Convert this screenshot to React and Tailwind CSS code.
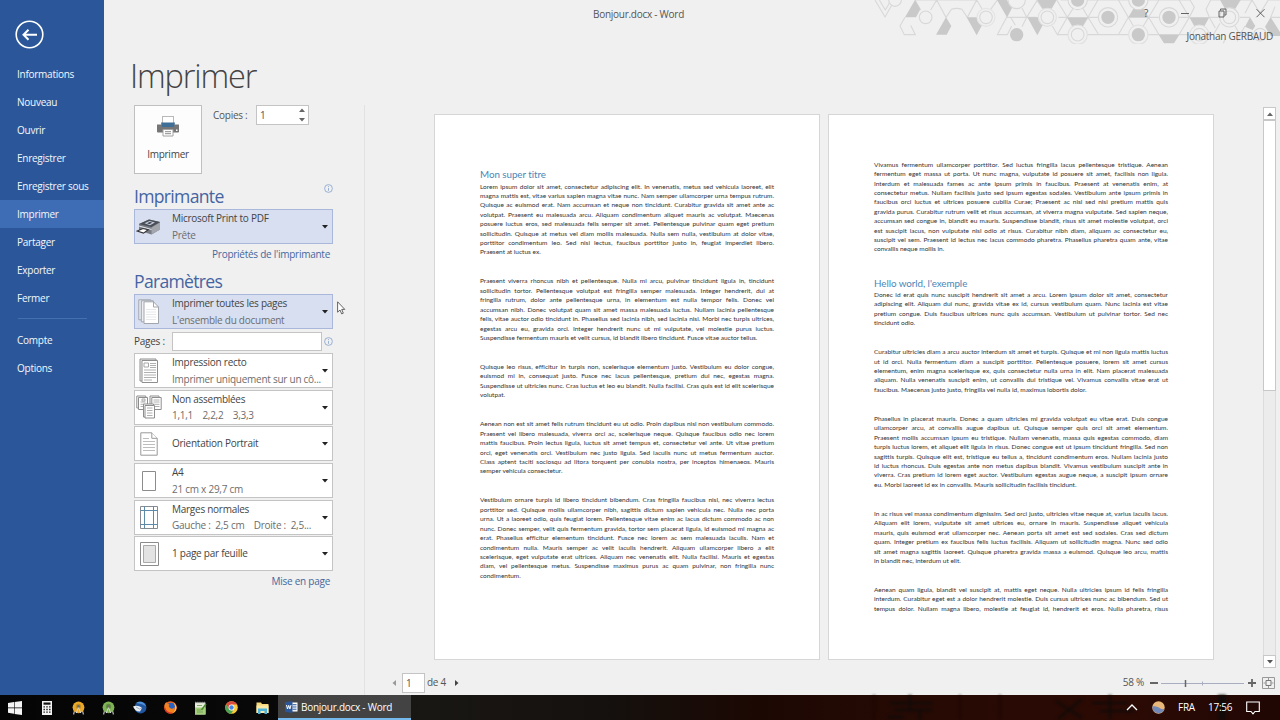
import clsx from "clsx";

const menuItems = [
  { label: "Informations" },
  { label: "Nouveau" },
  { label: "Ouvrir" },
  { label: "Enregistrer" },
  { label: "Enregistrer sous" },
  { label: "Imprimer", active: true },
  { label: "Partager" },
  { label: "Exporter" },
  { label: "Fermer" },
];

// every entry is one paragraph, already split into lines
const pageOne = [
  [
    "Lorem ipsum dolor sit amet, consectetur adipiscing elit. In venenatis, metus sed vehicula laoreet, elit",
    "magna mattis est, vitae varius sapien magna vitae nunc. Nam semper ullamcorper urna tempus rutrum.",
    "Quisque ac euismod erat. Nam accumsan et neque non tincidunt. Curabitur gravida sit amet ante ac",
    "volutpat. Praesent eu malesuada arcu. Aliquam condimentum aliquet mauris ac volutpat. Maecenas",
    "posuere luctus eros, sed malesuada felis semper sit amet. Pellentesque pulvinar quam eget pretium",
    "sollicitudin. Quisque at metus vel diam mollis malesuada. Nulla sem nulla, vestibulum at dolor vitae,",
    "porttitor condimentum leo. Sed nisi lectus, faucibus porttitor justo in, feugiat imperdiet libero.",
    "Praesent at luctus ex.",
  ],
  [
    "Praesent viverra rhoncus nibh et pellentesque. Nulla mi arcu, pulvinar tincidunt ligula in, tincidunt",
    "sollicitudin tortor. Pellentesque volutpat est fringilla semper malesuada. Integer hendrerit, dui at",
    "fringilla rutrum, dolor ante pellentesque urna, in elementum est nulla tempor felis. Donec vel",
    "accumsan nibh. Donec volutpat quam sit amet massa malesuada luctus. Nullam lacinia pellentesque",
    "felis, vitae auctor odio tincidunt in. Phasellus sed lacinia nibh, sed lacinia nisi. Morbi nec turpis ultrices,",
    "egestas arcu eu, gravida orci. Integer hendrerit nunc ut mi vulputate, vel molestie purus luctus.",
    "Suspendisse fermentum mauris et velit cursus, id blandit libero tincidunt. Fusce vitae auctor tellus.",
  ],
  [
    "Quisque leo risus, efficitur in turpis non, scelerisque elementum justo. Vestibulum eu dolor congue,",
    "euismod mi in, consequat justo. Fusce nec lacus pellentesque, pretium dui nec, egestas magna.",
    "Suspendisse ut ultricies nunc. Cras luctus et leo eu blandit. Nulla facilisi. Cras quis est id elit scelerisque",
    "volutpat.",
  ],
  [
    "Aenean non est sit amet felis rutrum tincidunt eu ut odio. Proin dapibus nisl non vestibulum commodo.",
    "Praesent vel libero malesuada, viverra orci ac, scelerisque neque. Quisque faucibus odio nec lorem",
    "mattis faucibus. Proin lectus ligula, luctus sit amet tempus et, consectetur vel ante. Ut vitae pretium",
    "orci, eget venenatis orci. Vestibulum nec justo ligula. Sed iaculis nunc ut metus fermentum auctor.",
    "Class aptent taciti sociosqu ad litora torquent per conubia nostra, per inceptos himenaeos. Mauris",
    "semper vehicula consectetur.",
  ],
  [
    "Vestibulum ornare turpis id libero tincidunt bibendum. Cras fringilla faucibus nisl, nec viverra lectus",
    "porttitor sed. Quisque mollis ullamcorper nibh, sagittis dictum sapien vehicula nec. Nulla nec porta",
    "urna. Ut a laoreet odio, quis feugiat lorem. Pellentesque vitae enim ac lacus dictum commodo ac non",
    "nunc. Donec semper, velit quis fermentum gravida, tortor sem placerat ligula, id euismod mi magna ac",
    "erat. Phasellus efficitur elementum tincidunt. Fusce nec lorem ac sem malesuada iaculis. Nam et",
    "condimentum nulla. Mauris semper ac velit iaculis hendrerit. Aliquam ullamcorper libero a elit",
    "scelerisque, eget vulputate erat ultrices. Aliquam nec venenatis elit. Nulla facilisi. Mauris et egestas",
    "diam, vel pellentesque metus. Suspendisse maximus purus ac quam pulvinar, non fringilla nunc",
    "condimentum.",
  ],
];

const pageTwoTop = [
  [
    "Vivamus fermentum ullamcorper porttitor. Sed luctus fringilla lacus pellentesque tristique. Aenean",
    "fermentum eget massa ut porta. Ut nunc magna, vulputate id posuere sit amet, facilisis non ligula.",
    "Interdum et malesuada fames ac ante ipsum primis in faucibus. Praesent at venenatis enim, at",
    "consectetur metus. Nullam facilisis justo sed ipsum egestas sodales. Vestibulum ante ipsum primis in",
    "faucibus orci luctus et ultrices posuere cubilia Curae; Praesent ac nisl sed nisi pretium mattis quis",
    "gravida purus. Curabitur rutrum velit et risus accumsan, at viverra magna vulputate. Sed sapien neque,",
    "accumsan sed congue in, blandit eu mauris. Suspendisse blandit, risus sit amet molestie volutpat, orci",
    "est suscipit lacus, non vulputate nisl odio at risus. Curabitur nibh diam, aliquam ac consectetur eu,",
    "suscipit vel sem. Praesent id lectus nec lacus commodo pharetra. Phasellus pharetra quam ante, vitae",
    "convallis neque mollis in.",
  ],
];

const pageTwoBottom = [
  [
    "Donec id erat quis nunc suscipit hendrerit sit amet a arcu. Lorem ipsum dolor sit amet, consectetur",
    "adipiscing elit. Aliquam dui nunc, gravida vitae ex id, cursus vestibulum quam. Nunc lacinia est vitae",
    "pretium congue. Duis faucibus ultrices nunc quis accumsan. Vestibulum ut pulvinar tortor. Sed nec",
    "tincidunt odio.",
  ],
  [
    "Curabitur ultricies diam a arcu auctor interdum sit amet et turpis. Quisque et mi non ligula mattis luctus",
    "ut id orci. Nulla fermentum diam a suscipit porttitor. Pellentesque posuere, lorem sit amet cursus",
    "elementum, enim magna scelerisque ex, quis consectetur nulla urna in elit. Nam placerat malesuada",
    "aliquam. Nulla venenatis suscipit enim, ut convallis dui tristique vel. Vivamus convallis vitae erat ut",
    "faucibus. Maecenas justo justo, fringilla vel nulla id, maximus lobortis dolor.",
  ],
  [
    "Phasellus in placerat mauris. Donec a quam ultricies mi gravida volutpat eu vitae erat. Duis congue",
    "ullamcorper arcu, at convallis augue dapibus ut. Quisque semper quis orci sit amet elementum.",
    "Praesent mollis accumsan ipsum eu tristique. Nullam venenatis, massa quis egestas commodo, diam",
    "turpis luctus lorem, et aliquet elit ligula in risus. Donec congue est ut ipsum tincidunt fringilla. Sed non",
    "sagittis turpis. Quisque elit est, tristique eu tellus a, tincidunt condimentum eros. Nullam lacinia justo",
    "id luctus rhoncus. Duis egestas ante non metus dapibus blandit. Vivamus vestibulum suscipit ante in",
    "viverra. Cras pretium id lorem eget auctor. Vestibulum egestas augue neque, a suscipit ipsum ornare",
    "eu. Morbi laoreet id ex in convallis. Mauris sollicitudin facilisis tincidunt.",
  ],
  [
    "In ac risus vel massa condimentum dignissim. Sed orci justo, ultricies vitae neque at, varius iaculis lacus.",
    "Aliquam elit lorem, vulputate sit amet ultrices eu, ornare in mauris. Suspendisse aliquet vehicula",
    "mauris, quis euismod erat ullamcorper nec. Aenean porta sit amet est sed sodales. Cras sed dictum",
    "quam. Integer pretium ex faucibus felis luctus facilisis. Aliquam ut sollicitudin magna. Nunc sed odio",
    "sit amet magna sagittis laoreet. Quisque pharetra gravida massa a euismod. Quisque leo arcu, mattis",
    "in blandit nec, interdum ut elit.",
  ],
  [
    "Aenean quam ligula, blandit vel suscipit at, mattis eget neque. Nulla ultricies ipsum id felis fringilla",
    "interdum. Curabitur eget est a dolor hendrerit molestie. Duis cursus ultrices nunc ac bibendum. Sed ut",
    "tempus dolor. Nullam magna libero, molestie at feugiat id, hendrerit et eros. Nulla pharetra, risus",
  ],
];

const Paragraphs = ({ items, openEnd }) => (
  <div className="flex flex-col gap-[19.6px]">
    {items.map((lines, i) => (
      <div key={i}>
        {lines.map((line, j) => {
          const last = j === lines.length - 1 && !(openEnd && i === items.length - 1);
          return (
            <p
              key={j}
              className={clsx(
                "h-[9.43px] leading-[9.43px] whitespace-nowrap",
                last ? "text-left" : "text-justify [text-align-last:justify]"
              )}
            >
              {line}
            </p>
          );
        })}
      </div>
    ))}
  </div>
);

const DocHeading = ({ children }) => (
  <h3 className="h-[12px] leading-[12px] text-[9.8px] tracking-[-0.05px] text-[#4a86b8] whitespace-nowrap">{children}</h3>
);

const Sheet = ({ className, children }) => (
  <div
    className={clsx(
      "w-[386px] h-[546px] shrink-0 bg-white border border-[#d6d6d6] pl-[45px] pr-[45px] text-[6.5px] tracking-normal text-[#333] font-[Lato,sans-serif] [font-variant-ligatures:none]",
      className
    )}
  >
    {children}
  </div>
);

/* ---------- drawings ---------- */

const HexPattern = () => (
  <svg className="absolute right-0 top-0" width="420" height="44" viewBox="0 0 1260 132" fill="none" stroke="#d8d8d8" strokeWidth="3.3">
    <path d="M45 0L75 51L96 14M58 0L76 30L88 10M165 0H350M135 52L120 78L133 104H166L152 76M165 0L182 30M212 30L230 0L258 52L274 28Q290 22 306 28L322 52L350 0L366 26M392 28L412 0M440 52L412 104H442L455 78M440 52H500L532 0M440 52L455 24M486 24L500 52L486 80M452 52L466 76M590 0L622 52L592 104L577 78M592 104H628M676 104H716L684 52L714 0H775L805 52L775 104H716M602 0H626M680 0H714M622 52L652 104M684 52L652 104M622 52L640 24M684 52L668 24M775 104H808M862 104H897L866 52L897 0H957L988 52L957 104H897M805 52H866L850 78M805 52L820 78M775 0H808M862 0H897M622 52L595 52M684 52H714M866 52H896M957 52H988L1003 22L990 0H957M957 104H991M1046 104H1060L1080 70M1048 52L1038 28L1052 0H1080M1048 52H1078M1048 52L1066 84M1140 0H1176L1155 40M1176 0L1200 40L1225 0H1260M1140 52H1170M1232 52H1260M1245 20L1232 52M1125 78L1140 104L1132 124M1140 104H1172M1155 78L1140 104M1090 130L1096 116M530 0L548 26M500 52L530 52" />
    <g fill="#c9c9c9" stroke="none">
      <path d="M135 52L165 0L181 28L168 52ZM228 104L258 52L274 78L260 104ZM320 52H352L366 76L350 106ZM411 0H440L456 22L441 52ZM502 52H534L548 76L532 106ZM532 0H590L575 26H548ZM622 52H684L668 79H638ZM805 52L820 26H851L866 52ZM896 104H958L942 130H912ZM988 52H1048L1033 79H1003ZM1080 0H1142L1126 26H1095ZM1155 80L1170 52L1186 78L1178 90ZM1215 80L1232 52L1260 96V108H1232Z" />
    </g>
    <g fill="#f0f0f0">
      <circle cx="105" cy="0" r="19" />
      <circle cx="197" cy="52" r="19" />
      <circle cx="378" cy="52" r="27" stroke="#e4e4e4" />
      <circle cx="378" cy="52" r="19" />
      <circle cx="470" cy="0" r="26" />
      <circle cx="562" cy="52" r="27" stroke="#e0e0e0" />
      <circle cx="562" cy="52" r="19" />
      <circle cx="653" cy="0" r="29" />
      <circle cx="653" cy="104" r="29" stroke="#e0e0e0" />
      <circle cx="653" cy="104" r="19" />
      <circle cx="744" cy="52" r="29" />
      <circle cx="835" cy="0" r="29" />
      <circle cx="835" cy="104" r="29" stroke="#e0e0e0" />
      <circle cx="927" cy="52" r="29" />
      <circle cx="1018" cy="104" r="29" stroke="#e0e0e0" />
      <circle cx="1018" cy="104" r="19" />
      <circle cx="1108" cy="52" r="29" />
      <circle cx="1108" cy="52" r="19" />
      <circle cx="1200" cy="104" r="19" />
    </g>
    <g fill="#c9c9c9" stroke="none">
      <circle cx="470" cy="104" r="20" />
      <circle cx="653" cy="0" r="20" />
      <circle cx="744" cy="52" r="20" />
      <circle cx="835" cy="0" r="20" />
      <circle cx="835" cy="104" r="20" />
      <circle cx="927" cy="52" r="20" />
    </g>
  </svg>
);

const PrinterIcon = () => (
  <svg width="24" height="21" viewBox="0 0 24 21">
    <path d="M1 8.5h22v7a1 1 0 0 1-1 1H2a1 1 0 0 1-1-1z" fill="#767676" />
    <rect x="6.5" y=".5" width="11" height="8" fill="#fff" stroke="#b9b9b9" />
    <path d="M5 6.500h14l-1 4.500H6z" fill="#3f6e96" />
    <path d="M7 13.5h10v6.500H7z" fill="#fff" stroke="#a2a2a2" />
    <path d="M9 15.700h6M9 17.700h6" stroke="#8b8b8b" />
    <rect x="20" y="13.500" width="1.500" height="1.500" fill="#fff" />
  </svg>
);

const DeviceIcon = () => (
  <svg width="26" height="18" viewBox="0 0 26 18">
    <path d="M3 6L13 1.500l11 2.500v7.500L15.500 16.500 3 12.500z" fill="#777b83" />
    <path d="M3 6L13 1.500l11 2.500-8.500 5z" fill="#4a4e56" />
    <path d="M8.500 5.300L13.500 3l5.500 1.500-5 2.700z" fill="#c3cbdc" />
    <path d="M11 5.200l3-1.300 2.300.8-3 1.400z" fill="#33373e" />
    <path d="M15.500 9.500l8.500-5v7L15.500 16.500z" fill="#a3a6ad" />
    <path d="M3 8l12.500 3.500" stroke="#e0e3ea" strokeWidth="1.200" />
    <path d="M1.200 13L7 10.500l5.200 1.300-4.700 3.300z" fill="#fff" stroke="#333" strokeWidth="1.100" />
  </svg>
);

const PagesIcon = () => (
  <svg width="22" height="26" viewBox="0 0 22 26" fill="#eceef3" stroke="#a1a5ad">
    <path d="M.8 .8h12v20H.8z" />
    <path d="M3.300 1.800h12v21h-12z" />
    <path d="M6 2.800h9.500l5 5.200v16.500H6z" fill="#fff" />
    <path d="M15.500 2.800V8h5" fill="none" />
    <path d="M8 10.500h10M8 13h10M8 15.500h10M8 18h10M8 20.500h10" stroke="#e6e8ec" />
  </svg>
);

const OneSidedIcon = () => (
  <svg width="20" height="26" viewBox="0 0 20 26" fill="#fff" stroke="#8e8e8e">
    <path d="M1 1h16v22H1z" fill="#eee" />
    <path d="M3 2.500h15.500v22H3z" />
    <path d="M5 5h4.500v4H5z" stroke="#a8a8a8" />
    <path d="M11 5.500h6M11 7.500h6M11 9.500h6M5 12h12M5 14.500h12M5 17h12M5 19.500h12M5 22h8" stroke="#b0b0b0" />
  </svg>
);

const CollateIcon = () => (
  <svg width="26" height="24" viewBox="0 0 26 24" fill="#fff" stroke="#8e8e8e">
    <path d="M.8 1h9v12h-9z" />
    <path d="M2.500 2.500h9v12h-9z" />
    <path d="M14 1h9v12h-9z" />
    <path d="M15.800 2.500h9.400v12h-9.400z" />
    <path d="M4.500 7h5M4.500 9.300h5M4.500 11.500h5M17.500 5h6M17.500 7h6M17.500 9.300h6M17.500 11.500h6" stroke="#b0b0b0" />
    <path d="M6 4h3v2H6z" stroke="#a8a8a8" />
    <path d="M7.500 9h10v13h-10z" />
    <path d="M9 10.500h9.500v12.500H9z" />
    <path d="M11 13h5.500M11 15.500h5.500M11 18h5.500M11 20.500h5.500" stroke="#b0b0b0" />
  </svg>
);

const PortraitIcon = () => (
  <svg width="18" height="24" viewBox="0 0 18 24" fill="#fff" stroke="#999">
    <path d="M.8 .8h11l5.400 5.500v16.900H.8z" />
    <path d="M11.800 .8v5.500h5.400" />
    <path d="M3 6.500h6M3 9.500h12M3 12.500h12M3 15.500h12M3 18.500h12" stroke="#bdbdbd" />
  </svg>
);

const A4Icon = () => (
  <svg width="14" height="20" viewBox="0 0 14 20">
    <path d="M.5 .5h13v19H.5z" fill="#fff" stroke="#8c8c8c" />
  </svg>
);

const MarginsIcon = () => (
  <svg width="18" height="23" viewBox="0 0 18 23" fill="none">
    <path d="M.5 .5h17v22H.5z" fill="#fff" stroke="#858b91" />
    <path d="M4.500 .5v22M13.500 .5v22M.5 4.500h17M.5 18.500h17" stroke="#5d8aa8" />
  </svg>
);

const SheetIcon = () => (
  <svg width="19" height="24" viewBox="0 0 19 24">
    <path d="M.5 .5h18v23H.5z" fill="#fff" stroke="#8c8c8c" />
    <path d="M3.500 3.500h12v17h-12z" fill="#e3e3e3" stroke="#a9a9a9" />
  </svg>
);

const InfoIcon = () => (
  <svg width="9" height="9" viewBox="0 0 9 9" fill="none" stroke="#8fa9cf" strokeWidth=".9">
    <circle cx="4.500" cy="4.500" r="3.900" />
    <path d="M4.500 4v2.800M4.500 2.100v1" />
  </svg>
);

const WindowsLogo = () => (
  <svg width="14" height="14" viewBox="0 0 14 14" fill="#f5f5f5">
    <path d="M0 2l6-.9v5.500H0zM6.600 1L14 0v6.600H6.600zM0 7.200h6v5.500l-6-.9zM6.600 7.200H14V14l-7.400-1z" />
  </svg>
);

const CalculatorIcon = () => (
  <svg width="10" height="14" viewBox="0 0 10 14">
    <rect width="10" height="14" fill="#f3f3f3" />
    <path d="M1.500 1.500h7v2.200h-7z" fill="#111" />
    <path d="M2.200 5.200v7.500M5 5.200v7.500M7.800 5.200v7.500" stroke="#222" strokeWidth="1.500" strokeDasharray="1.400 1.200" />
  </svg>
);

const StudioIcon = ({ color, inner }) => (
  <svg width="13" height="14" viewBox="0 0 13 14">
    <path d="M3 8L1.500 13.500M10 8l1.500 5.500" stroke="#a9a9a9" strokeWidth="1.300" />
    <circle cx="6.500" cy="6.300" r="5.900" fill={color} />
    <circle cx="6.500" cy="5.500" r="2.700" fill={inner} />
    <path d="M4.300 12l2.200-5.500L8.700 12" fill="none" stroke="#d8d8d8" strokeWidth="1" />
    <circle cx="6.500" cy="5.200" r="1.300" fill="#6b6b5a" />
  </svg>
);

const ThunderbirdIcon = () => (
  <svg width="14" height="13" viewBox="0 0 14 13">
    <circle cx="7.500" cy="6.500" r="6" fill="#2257a0" />
    <path d="M3 2C6-.5 12 .5 13 5.500 10 3 7 2.500 3 2z" fill="#4f93d8" />
    <path d="M0 5.500c3-1.500 6-1 9 1.500L7 10.500C4 11 1.500 9 0 5.500z" fill="#e8ebf1" />
    <path d="M3 6l3.500 2L9 7" fill="none" stroke="#8592a8" strokeWidth=".7" />
  </svg>
);

const FirefoxIcon = () => (
  <svg width="13" height="13" viewBox="0 0 13 13">
    <circle cx="6.500" cy="6.500" r="6.200" fill="#f2661f" />
    <circle cx="7" cy="5.700" r="4" fill="#2a62c4" />
    <path d="M.5 4C1 2 2 1.500 2.500 1c.2 1.500 1.500 2 3 2.500C4 5 5 6.500 7 7.500c2 .6 3-.5 3.500-1.500 1 3-1.500 5.500-4 5.500C3 11.500 0 8 .5 4z" fill="#f58220" />
    <path d="M9 1.200c2.500 1.500 4 4 3.500 6.500-.5 2.500-3 4.500-5 4.800 3-1.500 4-4.500 3.500-7C10.700 3.500 10 2.300 9 1.200z" fill="#fcc43b" />
    <path d="M.7 7c.8 3.500 4 5.500 7 5.200" fill="none" stroke="#d7342f" strokeWidth="1.200" />
  </svg>
);

const NotepadIcon = () => (
  <svg width="13" height="14" viewBox="0 0 13 14">
    <path d="M1 1.500h10.500v12H1z" fill="#e9eedf" />
    <path d="M1 6.500h10.500v7H1z" fill="#a4cf7a" />
    <path d="M1 1.500h10.500" stroke="#999" strokeWidth="1.500" strokeDasharray="1 .8" />
    <path d="M3 4.500h5M3 9h4M3 11h6" stroke="#6d9450" strokeWidth=".8" />
    <path d="M12 3L7.500 9" stroke="#4c8a2d" strokeWidth="1.500" />
  </svg>
);

const ChromeIcon = () => (
  <svg width="13" height="13" viewBox="0 0 13 13">
    <circle cx="6.500" cy="6.500" r="6.300" fill="#f9cb3a" />
    <path d="M1 3.400A6.300 6.300 0 0 1 12 3.400H6.500L3.900 8z" fill="#dd4b3e" />
    <path d="M1 3.400L3.900 8l2.600 1.500 1.600.2L6 12.800A6.300 6.300 0 0 1 1 3.400z" fill="#4ba456" />
    <circle cx="6.500" cy="6.500" r="2.900" fill="#fff" />
    <circle cx="6.500" cy="6.500" r="2.200" fill="#4a86e0" />
  </svg>
);

const FolderIcon = () => (
  <svg width="13" height="12" viewBox="0 0 13 12">
    <path d="M.5 .5H5l1 1.500h6.500V11H.5z" fill="#f6d77b" />
    <path d="M.5 3.500h12V11H.5z" fill="#fbe8a4" />
    <path d="M2 12V6.500h9V12H8.500V9h-4v3z" fill="#4fb4dc" />
  </svg>
);

const WordIcon = () => (
  <svg width="13" height="12" viewBox="0 0 13 12">
    <path d="M6 1.500h6.500v9H6z" fill="#fff" />
    <path d="M7.500 3.500h4M7.500 5.200h4M7.500 6.900h4M7.500 8.600h4" stroke="#2b579a" strokeWidth=".8" />
    <path d="M0 1.300L7.500 0v12L0 10.700z" fill="#2b579a" />
    <path d="M1.500 4l1 4 1.200-3.600L4.900 8l1.100-4" fill="none" stroke="#fff" />
  </svg>
);

const Cursor = () => (
  <svg className="absolute left-[337px] top-[301px]" width="9" height="14" viewBox="0 0 9 14">
    <path d="M.6 .8v10.400L3 9l1.700 3.900 1.600-.7L4.700 8.400h3.100z" fill="#fff" stroke="#555" strokeWidth=".9" />
  </svg>
);

const Triangle = ({ className, up }) => (
  <svg className={clsx("shrink-0", className)} width="6" height="4" viewBox="0 0 6 4">
    <path d={up ? "M0 4L3 .5 6 4z" : "M0 0L3 3.500 6 0z"} fill="currentColor" />
  </svg>
);

/* ---------- print settings ---------- */

const OptionBox = ({ icon, title, detail, blue }) => (
  <div
    className={clsx(
      "flex items-center h-[35px] w-[199px] border shrink-0",
      blue ? "bg-[#d7dff1] border-[#a9b8da]" : "bg-white border-[#c4c4c4]"
    )}
  >
    <div className="w-[28px] flex justify-center shrink-0">{icon}</div>
    <div className={clsx("flex-1 min-w-0 pl-[9px] leading-[16.5px] whitespace-nowrap", !detail && "pb-[2px]")}>
      <p className="text-[#444]">{title}</p>
      {detail && <p className="text-[#6d6d6d] whitespace-pre">{detail}</p>}
    </div>
    <Triangle className="mr-[4px] mt-[1px] text-[#222]" />
  </div>
);

const Settings = () => (
  <section className="w-[261px] pl-[30px] pr-[31px] border-r border-[#e2e2e2] flex flex-col text-[#444]">
    <div className="flex">
      <button className="w-[68px] h-[69px] bg-[#fdfdfd] border border-[#c0c0c0] flex flex-col items-center pt-[10px]">
        <PrinterIcon />
        <span className="mt-[9px] leading-[16px]">Imprimer</span>
      </button>
      <span className="ml-[11px] w-[43px] leading-[20px] whitespace-nowrap text-[#555]">Copies :</span>
      <div className="w-[53px] h-[20px] bg-white border border-[#c4c4c4] flex items-center justify-between pl-[3px] pr-[3px]">
        <span className="text-[#555]">1</span>
        <span className="flex flex-col gap-[6px] text-[#666]">
          <Triangle up />
          <Triangle />
        </span>
      </div>
    </div>

    <div className="flex justify-between mt-[8px] h-[27px]">
      <h2 className="text-[17.600px] leading-[28px] tracking-[-0.700px] text-[#4464a2]">Imprimante</h2>
      <span className="mt-[2px]"><InfoIcon /></span>
    </div>
    <OptionBox blue icon={<DeviceIcon />} title="Microsoft Print to PDF" detail="Prête" />
    <a className="self-end mr-[3px] h-[20px] leading-[20px] text-[#44689f]">Propriétés de l'imprimante</a>

    <h2 className="h-[30px] text-[17.600px] leading-[34px] tracking-[-0.700px] text-[#4464a2]">Paramètres</h2>
    <OptionBox blue icon={<PagesIcon />} title="Imprimer toutes les pages" detail="L'ensemble du document" />
    <div className="flex items-center h-[24px] shrink-0">
      <span className="w-[38px]">Pages :</span>
      <div className="w-[150px] h-[19px] bg-white border border-[#c4c4c4] mr-[2px]" />
      <InfoIcon />
    </div>
    <div className="flex flex-col gap-[1.700px]">
      <OptionBox icon={<OneSidedIcon />} title="Impression recto" detail="Imprimer uniquement sur un cô..." />
      <OptionBox icon={<CollateIcon />} title="Non assemblées" detail={"1,1,1    2,2,2    3,3,3"} />
      <OptionBox icon={<PortraitIcon />} title="Orientation Portrait" />
      <OptionBox icon={<A4Icon />} title="A4" detail="21 cm x 29,7 cm" />
      <OptionBox icon={<MarginsIcon />} title="Marges normales" detail={"Gauche :  2,5 cm    Droite :  2,5..."} />
      <OptionBox icon={<SheetIcon />} title="1 page par feuille" />
    </div>
    <a className="self-end mr-[3px] h-[20px] leading-[20px] text-[#44689f]">Mise en page</a>
  </section>
);

/* ---------- preview ---------- */

const ScrollBar = () => (
  <div className="w-[13px] h-[561px] mt-[2px] ml-[49px] flex flex-col bg-[#ececec] border-x border-[#dcdcdc]">
    <div className="-mx-px h-[13px] border border-[#c8c8c8] bg-white flex items-center justify-center text-[#666]">
      <Triangle up />
    </div>
    <div className="-mx-px h-[271px] border border-[#c8c8c8] bg-white" />
    <div className="-mx-px h-[13px] mt-auto border border-[#c8c8c8] bg-white flex items-center justify-center text-[#555]">
      <Triangle />
    </div>
  </div>
);

const Preview = () => (
  <section className="flex-1 flex flex-col">
    <div className="flex h-[564px] pl-[69px]">
      <Sheet className="mt-[9px] pt-[53px]">
        <DocHeading>Mon super titre</DocHeading>
        <div className="mt-[1.500px]"><Paragraphs items={pageOne} /></div>
      </Sheet>
      <Sheet className="mt-[9px] ml-[8px] pt-[44.700px]">
        <Paragraphs items={pageTwoTop} />
        <div className="mt-[23.300px]"><DocHeading>Hello world, l'exemple</DocHeading></div>
        <div className="mt-[0.700px]"><Paragraphs items={pageTwoBottom} openEnd /></div>
      </Sheet>
      <ScrollBar />
    </div>
    <div className="flex items-center justify-between h-[26px] pt-[1px] pl-[26px] pr-[5px] text-[#555]">
      <div className="flex items-center">
        <Triangle className="rotate-90 text-[#999]" />
        <span className="ml-[5px] w-[23px] h-[20px] bg-white border border-[#c4c4c4] pl-[3px] leading-[18px]">1</span>
        <span className="ml-[2px] w-[27px]">de 4</span>
        <Triangle className="-rotate-90 text-[#444]" />
      </div>
      <div className="flex items-center">
        <span className="mr-[5px]">58 %</span>
        <svg width="108" height="12" viewBox="0 0 108 12">
          <path d="M1 6h8M99 6h8M103 2v8" stroke="#666" strokeWidth="1.800" />
          <path d="M12 6.500h83" stroke="#a9adc0" />
          <path d="M53.500 4.500v4" stroke="#a9adc0" />
          <path d="M36.500 3v7" stroke="#666" strokeWidth="1.500" />
        </svg>
        <svg className="ml-[5px]" width="13" height="12" viewBox="0 0 13 12" fill="none" stroke="#777">
          <path d="M.5 .5h12v11H.5z" stroke="#999" />
          <path d="M4 3.500h5v5H4z" />
          <path d="M6.500 1v2M6.500 9v2M1.500 6h2M9.500 6h2" stroke="#999" />
        </svg>
      </div>
    </div>
  </section>
);

const Sidebar = () => (
  <nav className="w-[104px] bg-[#2b579a] text-[#f4f7fc] flex flex-col">
    <div className="h-[60px] pl-[15px] pt-[20px]">
      <svg width="29" height="29" viewBox="0 0 29 29" fill="none" stroke="#fff">
        <circle cx="14.500" cy="14.500" r="13.300" strokeWidth="1.600" />
        <path d="M8.500 14.700H22M13.500 9.700l-5 5 5 5" strokeWidth="2" />
      </svg>
    </div>
    {menuItems.map((item) => (
      <a key={item.label} className={clsx("h-[28px] leading-[28px] pl-[17px] whitespace-nowrap", item.active && "bg-[#3e6db5]")}>
        {item.label}
      </a>
    ))}
    <hr className="ml-[18px] mr-[17px] mt-[6px] border-[#4570b0]" />
    <a className="mt-[7px] h-[28px] leading-[28px] pl-[17px]">Compte</a>
    <a className="h-[28px] leading-[28px] pl-[17px]">Options</a>
  </nav>
);

const Header = () => (
  <header className="relative h-[54px]">
    <HexPattern />
    <div className="relative flex h-[27px] text-[#555]">
      <span className="w-[1069px] text-center leading-[28px]">Bonjour.docx - Word</span>
    </div>
    <div className="absolute right-[7px] top-0 text-right text-[#555]">
      <div className="flex items-center justify-end h-[26px] mr-[8px]">
        <span className="mr-[31px]">?</span>
        <svg width="86" height="10" viewBox="0 0 86 10" fill="none" stroke="#555">
          <path d="M2 5.500h8M40 3v6h5V3zM41.500 2.500V1H47v6h-1.500M77.500 1.200l8 8M85.500 1.200l-8 8" strokeWidth=".9" />
        </svg>
      </div>
      <p className="leading-[20px] whitespace-nowrap">Jonathan GERBAUD</p>
    </div>
  </header>
);

const Taskbar = () => (
  <footer className="relative h-[25px] flex items-center text-white bg-[linear-gradient(90deg,#050505_0,#080808_270px,#191713_420px,#14110e_600px,#1c0803_760px,#260a04_900px,#2c0a04_1120px,#200704_1280px)]">
    {/* wallpaper showing through the bar */}
    <svg className="absolute right-0 top-0 blur-[1.5px]" width="420" height="25" viewBox="0 0 420 25" fill="none" stroke="#120a08" strokeWidth="2.500">
      <path d="M14 0v25M100 0v25M140 0v25" stroke="#1a0602" strokeWidth="1.500" />
      <path d="M30 8h42M50 0v16M34 15h38M28 22h16M60 16v9M196 6l26 17M222 4l-24 20M232 8h36M240 16h34M250 0v24" />
      <path d="M362 0v25" strokeWidth="8" />
    </svg>
    <div className="flex items-center pl-[8px]">
      <span className="w-[31px]"><WindowsLogo /></span>
      <span className="w-[10px] mx-[3px]"><CalculatorIcon /></span>
      <span className="w-[31px] pl-[17px]"><StudioIcon color="#e9a92c" inner="#c98e1c" /></span>
      <span className="w-[31px] pl-[16px]"><StudioIcon color="#7fb356" inner="#5f8f3c" /></span>
      <span className="w-[31px] pl-[16px]"><ThunderbirdIcon /></span>
      <span className="w-[31px] pl-[16px]"><FirefoxIcon /></span>
      <span className="w-[31px] pl-[15px]"><NotepadIcon /></span>
      <span className="w-[31px] pl-[15px]"><ChromeIcon /></span>
      <span className="w-[31px] pl-[15px]"><FolderIcon /></span>
    </div>
    <div className="w-[133px] h-[25px] flex items-center pl-[7px] bg-[#434343] border-b-2 border-[#76b9ed] ml-[6px] shrink-0">
      <WordIcon />
      <span className="ml-[3px] mt-[1px] whitespace-nowrap">Bonjour.docx - Word</span>
    </div>
    <div className="relative ml-auto flex items-center pr-[20px]">
      <svg className="mr-[14px]" width="12" height="7" viewBox="0 0 12 7" fill="none" stroke="#fff" strokeWidth="1.300">
        <path d="M1 6l5-5 5 5" />
      </svg>
      <svg className="mr-[13px]" width="13" height="13" viewBox="0 0 13 13">
        <circle cx="6.500" cy="6.500" r="6.200" fill="#e9b778" />
        <path d="M.4 5.500c3-1 6 .5 7.500 1.800 1.500 1 3 1 4.500.8A6.200 6.200 0 0 1 .4 5.500z" fill="#7288b8" />
      </svg>
      <span className="w-[30px]">FRA</span>
      <span className="w-[38px]">17:56</span>
      <svg width="14" height="14" viewBox="0 0 14 14" fill="none" stroke="#fff" strokeWidth="1.100">
        <path d="M.7 1h12.600v9.500H9L7 12.800 5 10.500H.7z" />
      </svg>
    </div>
  </footer>
);

const App = () => {
  return (
    <div className="relative w-[1280px] h-[720px] overflow-hidden flex flex-col bg-[#f0f0f0] text-[10px] tracking-[-0.260px] font-['Open_Sans',sans-serif]">
      <div className="flex h-[695px]">
        <Sidebar />
        <main className="flex-1 flex flex-col">
          <Header />
          <h1 className="h-[51px] pl-[26px] text-[32.500px] leading-[43px] tracking-[-1.150px] font-light text-[#444]">Imprimer</h1>
          <div className="flex h-[590px]">
            <Settings />
            <Preview />
          </div>
        </main>
      </div>
      <Taskbar />
      <Cursor />
    </div>
  );
};

export default App;
